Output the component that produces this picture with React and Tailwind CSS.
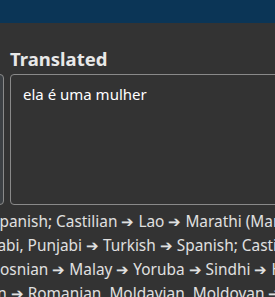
import React from "react";

const chain = [
  { text: "Spanish; Castilian ➔ Lao ➔ Marathi (Marathi) ➔ Hindi", shift: "-ml-[9px]" },
  { text: "Panjabi, Punjabi ➔ Turkish ➔ Spanish; Castilian ➔ Lao", shift: "-ml-[34px]" },
  { text: "Bosnian ➔ Malay ➔ Yoruba ➔ Sindhi ➔ Hausa", shift: "-ml-[10px]" },
  { text: "Latin ➔ Romanian, Moldavian, Moldovan ➔ Nepali", shift: "-ml-[29px]" },
];

export default function App() {
  return (
    <div
      className="w-[275px] h-[297px] overflow-hidden bg-[#333333] text-[#e6e6e6]"
      style={{ fontFamily: '"Noto Sans", "Open Sans", sans-serif' }}
    >
      {/* Header */}
      <div className="h-[23px] bg-[#0b3556]" />

      {/* Panels */}
      <div className="flex gap-[6px] -ml-[40px] mt-[24px]">
        <div className="w-[44px] shrink-0 flex flex-col">
          <div className="h-[27px]" />
          <div className="h-[131px] rounded-[4px] border border-[#8a8a8a] bg-[#3c4044]" />
        </div>
        <div className="w-[320px] shrink-0 flex flex-col">
          <h2 className="h-[27px] text-[18.5px] font-bold leading-[24px] text-[#e8e8e8]">
            Translated
          </h2>
          <div className="h-[131px] rounded-[4px] border border-[#8a8a8a] bg-[#333333] px-[12px] py-[8px] text-[15px] leading-[22px] text-white">
            ela é uma mulher
          </div>
        </div>
      </div>

      {/* Translation chain */}
      <div className="mt-[5px] text-[15.4px] leading-[24px] text-[#e0e0e0]">
        {chain.map((line, i) => (
          <div key={i} className={`whitespace-nowrap ${line.shift}`}>
            {line.text}
          </div>
        ))}
      </div>
    </div>
  );
}
